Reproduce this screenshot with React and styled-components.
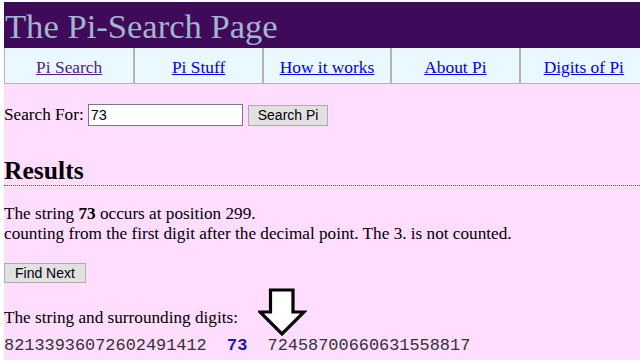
import React from 'react';
import styled, { createGlobalStyle } from 'styled-components';

const GlobalStyle = createGlobalStyle`
  html {
    background: #ffffff;
  }
  body {
    margin: 2px 0 0 4px;
    background: #ffddff;
    min-height: 358px;
    overflow: hidden;
    font-family: 'Liberation Serif', 'Times New Roman', serif;
    font-size: 17.2px;
    color: #000;
  }
`;

const Page = styled.div`
  width: 644px;
`;

const Banner = styled.header`
  background: #400a5a;
  height: 46px;
  display: flex;
  align-items: center;
`;

const Title = styled.h1`
  margin: 2px 0 0 1px;
  font-weight: normal;
  font-size: 34.6px;
  line-height: 46px;
  color: #a3b4cf;
`;

const Nav = styled.nav`
  display: grid;
  grid-template-columns: repeat(5, 1fr);
  background: #eaf8ff;
  border: 1px solid #b4b4b4;
  border-top: 0;
  height: 35px;
`;

const NavCell = styled.div`
  display: flex;
  align-items: center;
  justify-content: center;
  padding-top: 3px;
  border-left: ${(p) => (p.first ? '0' : '2px solid #b4b4b4')};
`;

const NavLink = styled.a`
  color: ${(p) => (p.visited ? '#551a8b' : '#0000ee')};
  text-decoration: underline;
  font-size: 17.4px;
`;

const SearchForm = styled.form`
  display: flex;
  align-items: center;
  margin-top: 20px;
  height: 22px;
`;

const Label = styled.label`
  margin-right: 4px;
`;

const TextInput = styled.input`
  box-sizing: border-box;
  width: 155px;
  height: 22px;
  border: 1px solid #7a7a7a;
  padding: 0 2px;
  font-family: 'Liberation Sans', Arial, sans-serif;
  font-size: 14.5px;
  color: #000;
  background: #fff;
  margin-right: 5px;
`;

const Button = styled.button`
  display: block;
  box-sizing: border-box;
  height: ${(p) => p.h || 21}px;
  padding: 0 ${(p) => p.pad || 8}px;
  border: 1px solid #adadad;
  background: #e1e1e1;
  font-family: 'Liberation Sans', Arial, sans-serif;
  font-size: 14px;
  color: #000;
`;

const Heading = styled.h2`
  margin: 31px 0 0;
  font-size: 25.6px;
  line-height: 28px;
  padding-bottom: 0;
  border-bottom: 1px dotted #f0204a;
`;

const Para = styled.p`
  margin: ${(p) => p.top || 0}px 0 0;
  line-height: 20px;
`;

const ButtonRow = styled.div`
  margin-top: 19px;
`;

const Digits = styled.div`
  margin-top: 8px;
  font-family: 'Liberation Mono', 'Courier New', monospace;
  font-size: 16.9px;
  color: #333;
  white-space: pre;
  line-height: 20px;
`;

const Hit = styled.b`
  color: #1a1aa0;
`;

const Arrow = styled.svg`
  display: inline-block;
  vertical-align: baseline;
  margin: -32px 0 -13px 20px;
`;

const tabs = ['Pi Search', 'Pi Stuff', 'How it works', 'About Pi', 'Digits of Pi'];

export default function App() {
  return (
    <Page>
      <GlobalStyle />
      <Banner>
        <Title>The Pi-Search Page</Title>
      </Banner>
      <Nav>
        {tabs.map((t, i) => (
          <NavCell key={t} first={i === 0}>
            <NavLink href="#" visited={i === 0}>{t}</NavLink>
          </NavCell>
        ))}
      </Nav>
      <SearchForm onSubmit={(e) => e.preventDefault()}>
        <Label>Search For:</Label>
        <TextInput defaultValue="73" />
        <Button pad={9}>Search Pi</Button>
      </SearchForm>
      <Heading>Results</Heading>
      <Para top={18}>
        The string <b>73</b> occurs at position 299.
        <br />
        counting from the first digit after the decimal point. The 3. is not counted.
      </Para>
      <ButtonRow>
        <Button pad={10} h={20}>Find Next</Button>
      </ButtonRow>
      <Para top={25}>
        The string and surrounding digits:
        <Arrow width="49" height="48" viewBox="0 0 49 48">
          <path
            d="M12.5 2 H35 V24 H46 L24 46 L2 24 H12.5 Z"
            fill="#ffffff"
            stroke="#000000"
            strokeWidth="3.2"
            strokeLinejoin="miter"
          />
        </Arrow>
      </Para>
      <Digits>
        82133936072602491412  <Hit>73</Hit>  72458700660631558817
      </Digits>
    </Page>
  );
}
